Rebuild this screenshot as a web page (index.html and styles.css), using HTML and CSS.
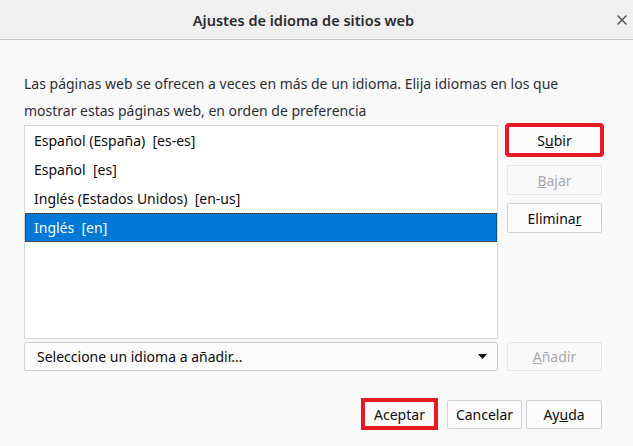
FILE: index.html
```html
<!DOCTYPE html>
<html lang="es">
<head>
<meta charset="utf-8">
<title>Ajustes de idioma de sitios web</title>
<link rel="stylesheet" href="styles.css">
</head>
<body>
<div class="dialog">
  <div class="titlebar">
    <span class="spacer"></span>
    <span class="title">Ajustes de idioma de sitios web</span>
    <span class="close">
      <svg width="10" height="10" viewBox="0 0 10 10"><path d="M0.5 0.5 L9.5 9.5 M9.5 0.5 L0.5 9.5" stroke="#4a4a4f" stroke-width="1.4" fill="none"/></svg>
    </span>
  </div>
  <div class="content">
    <p class="desc">Las páginas web se ofrecen a veces en más de un idioma. Elija idiomas en los que mostrar estas páginas web, en orden de preferencia</p>
    <div class="main">
      <div class="listbox">
        <div class="row">Español (España)&nbsp; [es-es]</div>
        <div class="row">Español&nbsp; [es]</div>
        <div class="row">Inglés (Estados Unidos)&nbsp; [en-us]</div>
        <div class="row selected">Inglés&nbsp; [en]</div>
      </div>
      <div class="side">
        <button class="btn marked">S<u>u</u>bir</button>
        <button class="btn disabled b-bajar"><u>B</u>ajar</button>
        <button class="btn b-elim">Elimina<u>r</u></button>
      </div>
    </div>
    <div class="addrow">
      <div class="dropdown">
        <span>Seleccione un idioma a añadir...</span>
        <svg width="9" height="5" viewBox="0 0 9 5"><path d="M0 0 H9 L4.5 5 Z" fill="#0c0c0d"/></svg>
      </div>
      <button class="btn disabled side-btn"><u>A</u>ñadir</button>
    </div>
    <div class="footer">
      <button class="btn accept">Aceptar</button>
      <button class="btn cancel">Cancelar</button>
      <button class="btn help">Ay<u>u</u>da</button>
    </div>
  </div>
</div>
</body>
</html>
```

FILE: styles.css
```css
* { box-sizing: border-box; }
html, body { margin: 0; padding: 0; }
body {
  width: 633px;
  height: 446px;
  background: #f9f9fa;
  font-family: "Noto Sans", "Open Sans", sans-serif;
  font-size: 14px;
  color: #0c0c0d;
  overflow: hidden;
}
.titlebar {
  height: 40px;
  background: #f0f0f0;
  border-bottom: 1px solid #c4c4c4;
  display: grid;
  grid-template-columns: 30px 1fr 56px;
  align-items: center;
}
.title {
  text-align: center;
  font-size: 14.5px;
  font-weight: 600;
  color: #2b2b30;
}
.close {
  display: flex;
  justify-content: flex-end;
  padding-right: 6px;
}
.close svg { display: block; }
.content {
  padding: 30px 31px 0 24px;
}
.desc {
  margin: 0;
  line-height: 27px;
  color: #2e2e35;
}
.main {
  display: flex;
  gap: 9px;
  margin-top: 1px;
}
.listbox {
  flex: 1;
  height: 214px;
  background: #fff;
  border: 1px solid #d7d7db;
}
.row {
  height: 29px;
  line-height: 29px;
  padding-left: 9px;
  white-space: pre;
}
.row.selected {
  background: #0078d7;
  color: #fff;
  outline: 1px dotted #2a2a2a;
  outline-offset: -1px;
}
.side {
  width: 95px;
  display: flex;
  flex-direction: column;
}
.btn {
  font-family: inherit;
  font-size: 14px;
  color: #0c0c0d;
  background: #fbfbfb;
  border: 1px solid #d0d0d4;
  border-radius: 2px;
  height: 30px;
  padding: 0;
  margin: 0;
}
.btn.disabled {
  color: #a8a8ab;
  border-color: #e6e6e8;
  background: #f9f9fa;
}
.btn.marked {
  outline: 4px solid #e41b23;
  outline-offset: -2px;
}
.b-bajar { margin-top: 10px; }
.b-elim { margin-top: 8px; }
.addrow {
  display: flex;
  gap: 9px;
  margin-top: 3px;
}
.dropdown {
  flex: 1;
  height: 29px;
  background: #fbfbfb;
  border: 1px solid #d0d0d4;
  border-radius: 2px;
  display: flex;
  align-items: center;
  justify-content: space-between;
  padding: 0 10px 0 12px;
}
.side-btn { width: 95px; height: 29px; }
.footer {
  display: flex;
  justify-content: flex-end;
  align-items: center;
  gap: 4px;
  margin-top: 27px;
}
.accept {
  width: 77px;
  height: 32px;
  border: 4px solid #e41b23;
  border-radius: 0;
  margin-right: 5px;
}
.cancel { width: 75px; height: 29px; }
.help { width: 76px; height: 29px; }
```
